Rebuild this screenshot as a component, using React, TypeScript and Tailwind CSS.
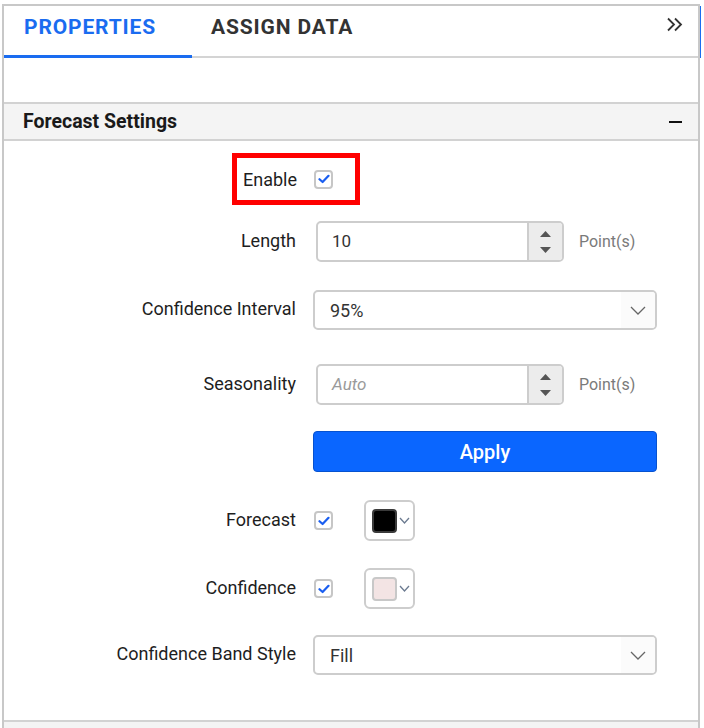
import React from "react";

const font = { fontFamily: "Roboto, 'Noto Sans', Arial, sans-serif" };

function CheckBox() {
  return (
    <span className="flex h-[19px] w-[19px] items-center justify-center rounded-[4px] border-2 border-[#c6c6c6] bg-white">
      <svg width="12" height="10" viewBox="0 0 12 10">
        <polyline points="1.5,5.2 4.6,8 10.5,1.8" fill="none" stroke="#1a5ef0" strokeWidth="2.2" strokeLinecap="round" strokeLinejoin="round" />
      </svg>
    </span>
  );
}

function Chevron({ w = 16, h = 9, color = "#666" }: { w?: number; h?: number; color?: string }) {
  return (
    <svg width={w} height={h} viewBox={`0 0 ${w} ${h}`}>
      <polyline points={`1,1 ${w / 2},${h - 1} ${w - 1},1`} fill="none" stroke={color} strokeWidth="1.3" />
    </svg>
  );
}

function Label({ children }: { children: React.ReactNode }) {
  return (
    <div className="w-[292px] shrink-0 pb-[3px] text-right text-[18px] text-[#1e1e1e]">{children}</div>
  );
}

function NumericInput({ value, placeholder }: { value?: string; placeholder?: string }) {
  return (
    <div className="ml-[3px] flex items-center">
      <div className="flex h-[41px] w-[248px] overflow-hidden rounded-[5px] border-2 border-[#cdcdcd] bg-white">
        <div className="flex flex-1 items-center pl-[14px] text-[17px]">
          {value ? (
            <span className="text-[#333]">{value}</span>
          ) : (
            <span className="italic text-[#9a9a9a]">{placeholder}</span>
          )}
        </div>
        <div className="flex w-[35px] flex-col items-center justify-center gap-[10px] border-l-2 border-[#cdcdcd] bg-[#ececec]">
          <svg width="11" height="6" viewBox="0 0 11 6">
            <polygon points="0,6 5.5,0 11,6" fill="#555" />
          </svg>
          <svg width="11" height="6" viewBox="0 0 11 6">
            <polygon points="0,0 11,0 5.5,6" fill="#555" />
          </svg>
        </div>
      </div>
      <span className="ml-[15px] text-[16px] text-[#7a7a7a]">Point(s)</span>
    </div>
  );
}

function Dropdown({ value }: { value: string }) {
  return (
    <div className="flex h-[40px] w-[344px] overflow-hidden rounded-[5px] border-2 border-[#cdcdcd] bg-white">
      <div className="flex flex-1 items-center pl-[15px] text-[18px] text-[#333]">{value}</div>
      <div className="flex w-[34px] items-center justify-center bg-[#fbfbfb]">
        <Chevron />
      </div>
    </div>
  );
}

function ColorPicker({ swatch, border }: { swatch: string; border: string }) {
  return (
    <div className="ml-[31px] flex h-[41px] w-[51px] items-center rounded-[6px] border-2 border-[#cdcdcd] bg-white pl-[6px]">
      <span className={`h-[24px] w-[25px] rounded-[4px] border-2 ${swatch} ${border}`} />
      <span className="ml-[2px]">
        <Chevron w={11} h={7} color="#6b7a90" />
      </span>
    </div>
  );
}

export default function App() {
  return (
    <div className="relative h-[728px] w-[704px] overflow-hidden bg-white" style={font}>
      <div className="ml-[2px] mt-[4px] w-[698px] border-x-2 border-t-2 border-[#c8c8c8]">
        {/* tabs */}
        <div className="flex h-[52px] border-b-2 border-[#d4d4d4]">
          <div className="relative w-[188px] pl-[20px] pt-[9px] text-[21px] font-bold leading-[24px] tracking-[0.85px] text-[#1a6cf0]">
            PROPERTIES
            <span className="absolute -bottom-[2px] left-0 h-[3px] w-full bg-[#1a6cf0]" />
          </div>
          <div className="pl-[19px] pt-[9px] text-[21px] font-bold leading-[24px] tracking-[0.85px] text-[#333]">
            ASSIGN DATA
          </div>
          <div className="ml-auto pr-[14px] pt-[11px]">
            <svg width="18" height="15" viewBox="0 0 18 15">
              <polyline points="2,1.5 8,7.5 2,13.5" fill="none" stroke="#333" strokeWidth="1.8" />
              <polyline points="9,1.5 15,7.5 9,13.5" fill="none" stroke="#333" strokeWidth="1.8" />
            </svg>
          </div>
        </div>

        {/* section header */}
        <div className="mt-[44px] flex h-[39px] items-center border-y-2 border-[#d2d2d2] bg-[#f4f4f4] pl-[19px] pr-[16px]">
          <span className="text-[19.5px] font-bold text-[#1a1a1a]">Forecast Settings</span>
          <span className="ml-auto h-[2px] w-[13px] bg-[#111]" />
        </div>

        {/* Enable */}
        <div className="mt-[12px] flex h-[52px]">
          <div className="ml-[228px] flex w-[128px] items-center border-[5px] border-[#ff0000] pl-[6px]">
            <span className="text-[18px] text-[#1e1e1e]">Enable</span>
            <span className="ml-[17px]">
              <CheckBox />
            </span>
          </div>
        </div>

        <div className="mt-[16px] flex h-[41px] items-center gap-[17px]">
          <Label>Length</Label>
          <NumericInput value="10" />
        </div>

        <div className="mt-[28px] flex h-[40px] items-center gap-[17px]">
          <Label>Confidence Interval</Label>
          <Dropdown value="95%" />
        </div>

        <div className="mt-[34px] flex h-[41px] items-center gap-[17px]">
          <Label>Seasonality</Label>
          <NumericInput placeholder="Auto" />
        </div>

        <div className="mt-[26px] flex h-[41px] items-center gap-[17px]">
          <div className="w-[292px] shrink-0" />
          <button className="flex h-[41px] w-[344px] items-center justify-center rounded-[4px] border border-[#0652d0] bg-[#0a66ff] text-[20px] font-medium text-white">
            Apply
          </button>
        </div>

        <div className="mt-[28px] flex h-[41px] items-center gap-[17px]">
          <Label>Forecast</Label>
          <div className="flex items-center">
            <span className="ml-[1px]">
              <CheckBox />
            </span>
            <ColorPicker swatch="bg-black" border="border-[#3a3a3a]" />
          </div>
        </div>

        <div className="mt-[27px] flex h-[41px] items-center gap-[17px]">
          <Label>Confidence</Label>
          <div className="flex items-center">
            <span className="ml-[1px]">
              <CheckBox />
            </span>
            <ColorPicker swatch="bg-[#f3e4e4]" border="border-[#c8c8c8]" />
          </div>
        </div>

        <div className="mt-[26px] flex h-[40px] items-center gap-[17px]">
          <Label>Confidence Band Style</Label>
          <Dropdown value="Fill" />
        </div>

        <div className="mt-[45px] h-[20px] border-t-2 border-[#d2d2d2] bg-[#f4f4f4]" />
      </div>
      <span className="absolute left-[700px] top-[6px] h-[52px] w-[1px] bg-[#1a6cf0]" />
    </div>
  );
}
